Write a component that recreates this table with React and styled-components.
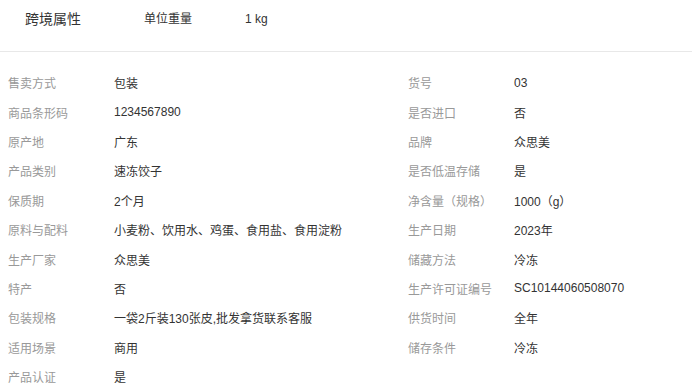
import styled, { createGlobalStyle } from 'styled-components';

const GlobalStyle = createGlobalStyle`
  body {
    margin: 0;
    background: #fff;
    overflow: hidden;
    font-family: 'Liberation Sans', 'Noto Sans CJK SC', sans-serif;
  }
`;

const rows = [
  ['售卖方式', '包装', '货号', '03'],
  ['商品条形码', '1234567890', '是否进口', '否'],
  ['原产地', '广东', '品牌', '众思美'],
  ['产品类别', '速冻饺子', '是否低温存储', '是'],
  ['保质期', '2个月', '净含量（规格）', '1000（g）'],
  ['原料与配料', '小麦粉、饮用水、鸡蛋、食用盐、食用淀粉', '生产日期', '2023年'],
  ['生产厂家', '众思美', '储藏方法', '冷冻'],
  ['特产', '否', '生产许可证编号', 'SC10144060508070'],
  ['包装规格', '一袋2斤装130张皮,批发拿货联系客服', '供货时间', '全年'],
  ['适用场景', '商用', '储存条件', '冷冻'],
  ['产品认证', '是'],
];

function App() {
  return (
    <Page>
      <GlobalStyle />
      <Header>
        <Title>跨境属性</Title>
        <HeaderLabel>单位重量</HeaderLabel>
        <HeaderValue>1 kg</HeaderValue>
      </Header>
      <Grid>
        {rows.map((row, i) =>
          row.map((text, j) =>
            j % 2 === 0 ? (
              <Label key={`${i}-${j}`}>{text}</Label>
            ) : (
              <Value key={`${i}-${j}`}>{text}</Value>
            )
          )
        )}
      </Grid>
    </Page>
  );
}

export default App;

const Page = styled.div`
  width: 100%;
`;

const Header = styled.div`
  display: flex;
  align-items: flex-start;
  height: 52px;
  box-sizing: border-box;
  padding: 9px 0 0 25px;
  border-bottom: 1px solid #e8e8e8;
  color: #333;
`;

const Title = styled.div`
  width: 119px;
  font-size: 14px;
  line-height: 20px;
`;

const HeaderLabel = styled.div`
  width: 101px;
  font-size: 12px;
  line-height: 20px;
`;

const HeaderValue = styled.div`
  font-size: 12px;
  line-height: 20px;
`;

const Grid = styled.div`
  display: grid;
  box-sizing: border-box;
  width: 100%;
  padding: 16px 0 0 8px;
  grid-template-columns: 106px 294px 106px 1fr;
  grid-auto-rows: 29.4px;
  align-items: center;
  font-size: 12px;
`;

const Label = styled.div`
  color: #999;
  white-space: nowrap;
`;

const Value = styled.div`
  color: #333;
  white-space: nowrap;
`;
